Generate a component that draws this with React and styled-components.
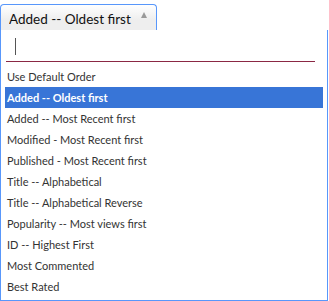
import styled, { createGlobalStyle } from 'styled-components';

const GlobalStyle = createGlobalStyle`
  html, body {
    margin: 0;
    padding: 0;
    background: #fff;
  }
  body {
    font-family: Lato, 'Open Sans', sans-serif;
  }
`;

const options = [
  'Use Default Order',
  'Added -- Oldest first',
  'Added -- Most Recent first',
  'Modified - Most Recent first',
  'Published - Most Recent first',
  'Title -- Alphabetical',
  'Title -- Alphabetical Reverse',
  'Popularity -- Most views first',
  'ID -- Highest First',
  'Most Commented',
  'Best Rated',
];

const Wrapper = styled.div`
  padding-top: 4px;
  width: 328px;
`;

const Choice = styled.div`
  box-sizing: border-box;
  width: 157px;
  height: 26px;
  display: flex;
  align-items: center;
  padding: 2px 0 0 8px;
  border: 1px solid #5897fb;
  border-bottom: none;
  border-radius: 4px 4px 0 0;
  background: linear-gradient(to bottom, #fff 0%, #eee 60%);
  color: #111;
  font-size: 13.5px;
`;

const Label = styled.span`
  flex: 1;
  white-space: nowrap;
  overflow: hidden;
`;

const Arrow = styled.span`
  flex: none;
  width: 0;
  height: 0;
  margin: -7px 9px 0 0;
  border-left: 3.5px solid transparent;
  border-right: 3.5px solid transparent;
  border-bottom: 6px solid #9a9a9a;
`;

const Drop = styled.div`
  box-sizing: border-box;
  width: 328px;
  height: 271px;
  border: 1px solid #5897fb;
  border-top: none;
  background: #fff;
  overflow: hidden;
`;

const Search = styled.div`
  margin: 0 12px 0 5px;
  height: 31px;
  border-bottom: 1px solid #8b2844;
  display: flex;
  align-items: center;
  padding-left: 9px;
`;

const Caret = styled.span`
  width: 1px;
  height: 17px;
  background: #555;
  margin-top: 1px;
`;

const Results = styled.ul`
  list-style: none;
  margin: 4px 4px 0 0;
  padding: 0 0 0 4px;
`;

const Option = styled.li`
  height: 21px;
  line-height: 21px;
  padding-left: 2px;
  font-size: 11px;
  color: ${(p) => (p.$active ? '#fff' : '#333')};
  font-weight: ${(p) => (p.$active ? 700 : 400)};
  background: ${(p) => (p.$active ? '#3875d7' : 'transparent')};
  white-space: nowrap;
`;

export default function App() {
  return (
    <>
      <GlobalStyle />
      <Wrapper>
        <Choice>
          <Label>Added -- Oldest first</Label>
          <Arrow />
        </Choice>
        <Drop>
          <Search>
            <Caret />
          </Search>
          <Results>
            {options.map((o, i) => (
              <Option key={o} $active={i === 1}>
                {o}
              </Option>
            ))}
          </Results>
        </Drop>
      </Wrapper>
    </>
  );
}
